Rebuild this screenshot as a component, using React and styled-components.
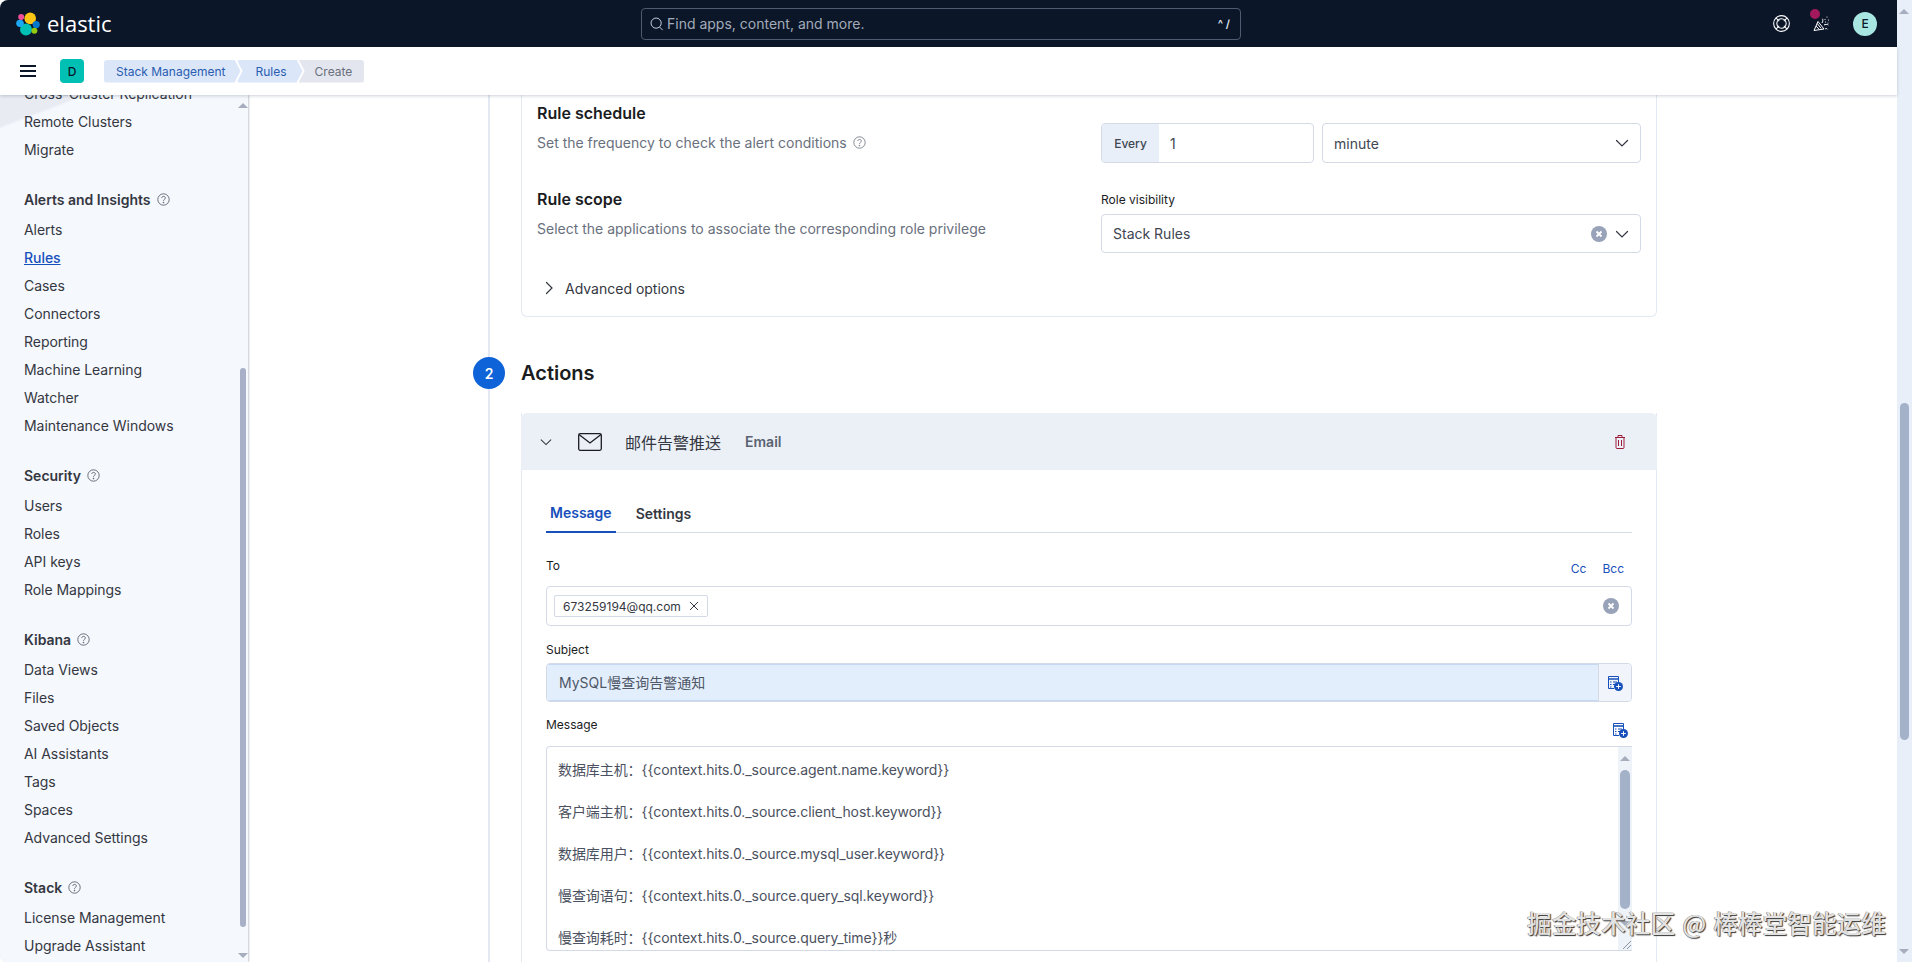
import React from 'react'
import styled, { createGlobalStyle } from 'styled-components'

const Global = createGlobalStyle`
  html, body { margin: 0; padding: 0; height: 100%; overflow: hidden; background: #fff; }
  body { font-family: Inter, "Noto Sans CJK SC", sans-serif; font-size: 14px; color: #343741; }
  * { box-sizing: border-box; }
`

const Screen = styled.div`
  position: relative;
  display: flex;
  width: 1912px;
  height: 962px;
  overflow: hidden;
`
const Shell = styled.div`
  width: 1897px;
  height: 962px;
  display: flex;
  flex-direction: column;
`
const PageScroll = styled.div`
  width: 15px;
  height: 962px;
  background: #e9eff8;
  padding: 403px 3px 0;
  position: relative;
`
const PageThumb = styled.div`
  height: 337px;
  background: #a3b1c9;
  border-radius: 5px;
`
const Arrow = styled.span`
  position: absolute;
  left: ${p => p.$left}px;
  ${p => (p.$down ? `bottom: ${p.$offset}px;` : `top: ${p.$offset}px;`)}
  width: 0;
  height: 0;
  border-left: 5px solid transparent;
  border-right: 5px solid transparent;
  ${p => (p.$down ? 'border-top: 5px solid #a6aebd;' : 'border-bottom: 5px solid #a6aebd;')}
`

const TopBar = styled.header`
  height: 47px;
  flex: none;
  background: #0b1628;
  border-top-left-radius: 8px;
  display: flex;
  align-items: center;
  padding: 0 20px 0 16px;
  color: #fff;
`
const Brand = styled.div`
  width: 625px;
  flex: none;
  display: flex;
  align-items: center;
  gap: 7px;
`
const BrandName = styled.span`
  font-family: "Open Sans", sans-serif;
  font-size: 22px;
  font-weight: 400;
  color: #fff;
  line-height: 24px;
  position: relative;
  top: -1px;
`
const SearchBox = styled.div`
  width: 600px;
  height: 32px;
  flex: none;
  border: 1px solid #4e5b70;
  border-radius: 4px;
  display: flex;
  align-items: center;
  padding: 0 10px 0 8px;
  gap: 3px;
  color: #a2abba;
  font-size: 14px;
`
const SearchText = styled.span`
  flex: 1;
`
const Shortcut = styled.span`
  font-size: 11px;
  font-weight: 600;
  color: #dfe5ef;
`
const HeaderIcons = styled.div`
  margin-left: auto;
  display: flex;
  align-items: center;
`
const HeaderIcon = styled.span`
  position: relative;
  width: 40px;
  height: 24px;
  display: flex;
  align-items: center;
  justify-content: center;
`
const Dot = styled.span`
  position: absolute;
  top: -3px;
  left: 9px;
  width: 10px;
  height: 10px;
  border-radius: 50%;
  background: #a3195b;
`
const Avatar = styled.span`
  width: 24px;
  height: 24px;
  margin-left: 12px;
  border-radius: 50%;
  background: #a8e6e2;
  color: #0b1628;
  font-size: 12px;
  font-weight: 500;
  display: flex;
  align-items: center;
  justify-content: center;
`

const CrumbBar = styled.div`
  height: 48px;
  flex: none;
  background: #fff;
  display: flex;
  align-items: center;
  padding: 0 0 0 20px;
  position: relative;
  z-index: 2;
  box-shadow: 0 1px 3px rgba(60, 75, 105, 0.25);
`
const Burger = styled.span`
  width: 16px;
  height: 12px;
  border-top: 2px solid #0b1628;
  border-bottom: 2px solid #0b1628;
  position: relative;
  &::after {
    content: '';
    position: absolute;
    left: 0;
    right: 0;
    top: 3px;
    height: 2px;
    background: #0b1628;
  }
`
const SpaceBadge = styled.span`
  width: 24px;
  height: 24px;
  margin-left: 24px;
  border-radius: 4px;
  background: #00bfb3;
  color: #0b1628;
  font-size: 12px;
  font-weight: 500;
  display: flex;
  align-items: center;
  justify-content: center;
`
const Crumbs = styled.div`
  display: flex;
  margin-left: 20px;
`
const Crumb = styled.span`
  height: 23px;
  display: flex;
  align-items: center;
  font-size: 12px;
  padding: ${p => (p.$first ? '0 15px 0 12px' : p.$current ? '0 12px 0 16px' : '0 16px 0 19px')};
  margin-left: ${p => (p.$first ? '0' : '-4px')};
  color: ${p => (p.$current ? '#69707d' : '#2a5cb0')};
  background: ${p => (p.$current ? '#e3e6ee' : '#dbe7f9')};
  border-radius: ${p => (p.$current ? '0 3px 3px 0' : '3px 0 0 3px')};
  clip-path: ${p =>
    p.$current
      ? 'polygon(0 0, 100% 0, 100% 100%, 0 100%, 6px 50%)'
      : p.$first
      ? 'polygon(0 0, calc(100% - 6px) 0, 100% 50%, calc(100% - 6px) 100%, 0 100%)'
      : 'polygon(0 0, calc(100% - 6px) 0, 100% 50%, calc(100% - 6px) 100%, 0 100%, 6px 50%)'};
`

const Body = styled.div`
  flex: 1;
  min-height: 0;
  display: flex;
`
const Sidebar = styled.aside`
  width: 248px;
  flex: none;
  position: relative;
  overflow: hidden;
  background: linear-gradient(159deg, #e8ebf2 29px, #f5f8fd 32px) no-repeat 0 0 / 100% 60px, #f5f8fd;
  box-shadow: 1px 0 2px rgba(60, 75, 105, 0.3);
  z-index: 1;
  border-bottom-left-radius: 8px;
`
const SideList = styled.div`
  margin-top: -16px;
  padding-left: 24px;
  display: flex;
  flex-direction: column;
`
const SideItem = styled.a`
  height: 28px;
  flex: none;
  display: flex;
  align-items: center;
  font-size: 14px;
  letter-spacing: -0.04px;
  color: ${p => (p.$active ? '#1750ba' : '#343741')};
  font-weight: ${p => (p.$active ? 500 : 400)};
  text-decoration: ${p => (p.$active ? 'underline' : 'none')};
`
const SideGroup = styled.div`
  height: 28px;
  margin-top: 22px;
  margin-bottom: 2px;
  flex: none;
  display: flex;
  align-items: center;
  gap: 6px;
  font-size: 14px;
  font-weight: 600;
  color: #343741;
`
const SideThumb = styled.div`
  position: absolute;
  left: 240px;
  top: 273px;
  width: 6px;
  height: 559px;
  border-radius: 3px;
  background: #a7b0c6;
`

const Main = styled.main`
  flex: 1;
  min-width: 0;
  overflow: hidden;
  padding-left: 240px;
`
const Steps = styled.div`
  width: 1169px;
  height: 100%;
  border-left: 2px solid #e3e8f2;
  padding-left: 31px;
  display: flex;
  flex-direction: column;
`
const Card = styled.section`
  width: 1136px;
  flex: none;
  border: 1px solid #e3e8f2;
  border-top: none;
  border-radius: 0 0 6px 6px;
  padding: 6px 15px 16px;
`
const Row = styled.div`
  display: grid;
  grid-template-columns: 564px 1fr;
  margin-bottom: ${p => p.$gap}px;
`
const RowTitle = styled.h3`
  margin: 0 0 7px;
  font-size: 16px;
  line-height: 24px;
  font-weight: 600;
  color: #1a1c21;
`
const RowText = styled.p`
  margin: 0;
  font-size: 14px;
  line-height: 21px;
  color: #69707d;
  display: flex;
  align-items: center;
  gap: 6px;
`
const ScheduleControls = styled.div`
  display: flex;
  gap: 8px;
  padding-top: 22px;
`
const Control = styled.div`
  height: ${p => p.$h || 40}px;
  flex: ${p => p.$flex || 1};
  border: 1px solid #d3dae6;
  border-radius: 4px;
  background: #fff;
  display: flex;
  align-items: center;
  font-size: 14px;
  color: #404652;
  overflow: hidden;
  min-width: 0;
`
const Prepend = styled.span`
  width: 57px;
  height: 100%;
  background: #e9eff8;
  font-size: 12px;
  font-weight: 500;
  display: flex;
  align-items: center;
  justify-content: center;
  flex: none;
`
const ControlText = styled.span`
  flex: 1;
  padding-left: 11px;
  white-space: nowrap;
`
const ControlIcons = styled.span`
  display: flex;
  align-items: center;
  gap: 7px;
  padding-right: 10px;
`
const ScopeField = styled.div`
  padding-top: 4px;
`
const SmallLabel = styled.label`
  display: block;
  font-size: 12px;
  line-height: 18px;
  font-weight: 400;
  color: #1a1c21;
  margin-bottom: ${p => p.$gap ?? 5}px;
`
const Advanced = styled.div`
  height: 24px;
  display: flex;
  align-items: center;
  gap: 8px;
  padding-left: 4px;
  font-size: 14px;
  color: #343741;
`
const StepHead = styled.div`
  margin: 40px 0 24px -48px;
  display: flex;
  align-items: center;
  gap: 16px;
  flex: none;
`
const StepNumber = styled.span`
  width: 32px;
  height: 32px;
  border-radius: 50%;
  background: #0f63d8;
  color: #fff;
  font-size: 14px;
  font-weight: 600;
  display: flex;
  align-items: center;
  justify-content: center;
`
const StepTitle = styled.h2`
  margin: 0;
  font-size: 20px;
  line-height: 32px;
  font-weight: 600;
  color: #1a1c21;
`
const ActionCard = styled.section`
  width: 1136px;
  flex: 1;
  border-right: 1px solid #e3e8f2;
  border-left: 1px solid #e3e8f2;
`
const ActionHead = styled.div`
  height: 57px;
  margin: 0 -1px;
  background: #ebf0f7;
  border-radius: 6px 6px 0 0;
  display: flex;
  align-items: center;
  padding: 0 21px 0 18px;
`
const MailSlot = styled.span`
  margin-left: 25px;
  display: flex;
`
const ActionName = styled.span`
  margin-left: 23px;
  font-size: 16px;
  color: #343741;
`
const ActionType = styled.span`
  margin-left: 24px;
  font-size: 14px;
  font-weight: 600;
  color: #5a6271;
`
const TrashSlot = styled.span`
  margin-left: auto;
  margin-right: 8px;
  display: flex;
`
const ActionBody = styled.div`
  padding: 23px 24px 0;
`
const Tabs = styled.div`
  height: 40px;
  display: flex;
  gap: 16px;
  border-bottom: 1px solid #d3dae6;
  margin-bottom: 24px;
`
const Tab = styled.span`
  height: 40px;
  padding: 0 4px;
  display: flex;
  align-items: center;
  font-size: 14px;
  font-weight: 600;
  color: ${p => (p.$active ? '#1750ba' : '#343741')};
  border-bottom: ${p => (p.$active ? '2px solid #1750ba' : 'none')};
`
const LabelRow = styled.div`
  height: ${p => p.$h}px;
  margin-top: ${p => p.$top || 0}px;
  display: flex;
  justify-content: space-between;
`
const LinkGroup = styled.div`
  display: flex;
  gap: 16px;
  padding: 3px 8px 0 0;
  font-size: 12px;
  line-height: 18px;
  color: #1750ba;
`
const FieldAction = styled.div`
  padding: 6px 4px 0 0;
`
const ChipBox = styled.div`
  height: 40px;
  border: 1px solid #d3dae6;
  border-radius: 4px;
  display: flex;
  align-items: center;
  justify-content: space-between;
  padding: 0 12px 0 7px;
`
const Chip = styled.span`
  width: 154px;
  height: 22px;
  border: 1px solid #d3dae6;
  border-radius: 2px;
  display: flex;
  align-items: center;
  justify-content: space-between;
  padding: 0 8px;
  font-size: 12px;
  font-weight: 400;
  color: #343741;
`
const SubjectBox = styled.div`
  height: 39px;
  display: flex;
  border: 1px solid #d3dae6;
  border-radius: 4px;
  overflow: hidden;
  margin-bottom: 14px;
`
const SubjectInput = styled.div`
  flex: 1;
  display: flex;
  align-items: center;
  padding: 0 0 1px 12px;
  background: #e3eefc;
  border: 1px solid #c5d9f3;
  border-width: 1px 0;
  font-size: 14px;
  color: #4f5766;
`
const SubjectAppend = styled.div`
  width: 33px;
  background: #f1f4fa;
  border-left: 1px solid #d3dae6;
  display: flex;
  align-items: center;
  justify-content: center;
`
const MessageBox = styled.div`
  height: 205px;
  border: 1px solid #d3dae6;
  border-right: none;
  border-radius: 4px 0 0 4px;
  display: flex;
  overflow: hidden;
`
const MessageLines = styled.div`
  flex: 1;
  padding: 12px 0 0 11px;
  font-size: 14px;
  line-height: 21px;
  letter-spacing: -0.08px;
  color: #4b5160;
`
const MessageLine = styled.div`
  height: 42px;
`
const Scroller = styled.div`
  position: relative;
  width: 14px;
  flex: none;
  margin-top: -1px;
  background: #eef2f9;
  padding: 24px 2px 0;
`
const ScrollThumb = styled.div`
  height: 139px;
  background: #a3b1c9;
  border-radius: 5px;
`
const Resizer = styled.svg`
  position: absolute;
  right: 0;
  bottom: 0;
`
const Watermark = styled.div`
  position: absolute;
  right: 26px;
  top: 906px;
  font-family: "Noto Sans CJK SC", sans-serif;
  font-size: 24.7px;
  line-height: 32px;
  font-weight: 500;
  word-spacing: 1.5px;
  white-space: nowrap;
  color: #e2e2e2;
  text-shadow: 1px 1px 1px #333, -0.5px -0.5px 0 #777;
`

const Line = ({ size = 16, color = '#343741', w = 1, children, vb = 16 }) => (
  <svg width={size} height={size} viewBox={`0 0 ${vb} ${vb}`} fill="none" stroke={color} strokeWidth={w}>
    {children}
  </svg>
)
const Down = props => (
  <Line w={1.2} {...props}>
    <path d="M2.5 5.500 8 11l5.500-5.500" strokeLinecap="round" />
  </Line>
)
const Right = props => (
  <Line w={1.2} {...props}>
    <path d="M5.500 2.500 11 8l-5.500 5.500" strokeLinecap="round" />
  </Line>
)
const Help = ({ size = 13, color = '#69707d' }) => (
  <Line size={size} color={color}>
    <circle cx="8" cy="8" r="7" />
    <path d="M5.800 6.200c.2-1.300 1.100-2 2.300-2 1.300 0 2.200.8 2.200 1.900 0 1.800-2.300 1.700-2.300 3.500" />
    <circle cx="8" cy="11.800" r=".5" fill={color} />
  </Line>
)
const Clear = () => (
  <svg width="16" height="16" viewBox="0 0 16 16">
    <circle cx="8" cy="8" r="8" fill="#98a2b8" />
    <path d="M5.500 5.500l5 5m0-5l-5 5" stroke="#fff" strokeWidth="1.800" />
  </svg>
)
const TokenIcon = () => (
  <svg width="16" height="16" viewBox="0 0 16 16" fill="none">
    <path d="M1.500 1.500h10v6M7 13.500H1.500v-12" stroke="#1750ba" strokeWidth="1" />
    <path d="M1.500 4h10" stroke="#1750ba" strokeWidth="1.600" />
    <path d="M3 7h1.500M6 7h4M3 9.500h1.500M6 9.500h2M3 12h1.500" stroke="#1750ba" strokeWidth="1" />
    <circle cx="11.500" cy="11.500" r="4.500" fill="#1750ba" />
    <path d="M11.500 9.200v4.600M9.200 11.500h4.600" stroke="#fff" strokeWidth="1" />
  </svg>
)
const Logo = () => (
  <svg width="24" height="24" viewBox="0 0 24 24">
    <circle cx="14.200" cy="6.400" r="5.800" fill="#fec514" />
    <circle cx="10" cy="17.600" r="6" fill="#00bfb3" />
    <ellipse cx="4" cy="11.300" rx="3.800" ry="3.600" fill="#1ba9f5" />
    <ellipse cx="5.200" cy="5" rx="3" ry="3" fill="#f04e98" />
    <ellipse cx="20.200" cy="12.600" rx="3.600" ry="3.600" fill="#0077cc" />
    <ellipse cx="18.400" cy="18.800" rx="3" ry="3" fill="#93c90e" />
  </svg>
)
const LifeRing = () => (
  <svg width="17" height="17" viewBox="0 0 16 16" fill="none" stroke="#fff" strokeWidth="1">
    <circle cx="8" cy="8" r="7.400" />
    <circle cx="8" cy="8" r="4.400" />
    <path d="M3 3l2.800 2.800M13 3l-2.800 2.800M3 13l2.800-2.800M13 13l-2.800-2.800" />
  </svg>
)
const Party = () => (
  <svg width="17" height="17" viewBox="0 0 17 17" fill="none" stroke="#fff" strokeWidth="1">
    <path d="M1 15.500 5 6.500l6 7.500z" />
    <path d="M3 11l3 3.200M4.200 8.500l4 5" />
    <path d="M9 8c1-1.600 1-3 .5-4.200M11 10c1.400-.8 3-.8 4.400 0M12 14c.8-.6 2-.6 2.500.3" />
    <path d="M12 4.500v.01M14 2v.01M15.500 5v.01M12.500 7v.01M15 8v.01" strokeLinecap="round" strokeWidth="1.200" />
  </svg>
)
const Mail = () => (
  <svg width="24" height="24" viewBox="0 0 24 24" fill="none" stroke="#1a1c21" strokeWidth="1.300">
    <rect x="0.700" y="3.700" width="22.600" height="16.600" rx="1.500" />
    <path d="M1 4.500 12 13 23 4.500" />
  </svg>
)
const Trash = () => (
  <svg width="16" height="16" viewBox="0 0 16 16" fill="none" stroke="#a01c3c" strokeWidth="1">
    <path d="M3 3.500h10M6 3.500V1.500h4v2M4 3.500v10a1 1 0 0 0 1 1h6a1 1 0 0 0 1-1v-10M6.500 6v6M9.500 6v6" />
  </svg>
)
const Glass = () => (
  <svg width="14" height="14" viewBox="0 0 16 16" fill="none" stroke="#cfd6e2" strokeWidth="1.100">
    <circle cx="7" cy="7" r="5.800" />
    <path d="M11 11.500l3.500 3.500" />
  </svg>
)
const Cross = () => (
  <svg width="10" height="10" viewBox="0 0 10 10" fill="none" stroke="#343741" strokeWidth="1">
    <path d="M1 1l8 8M9 1L1 9" />
  </svg>
)

const sideNav = [
  { items: ['Cross-Cluster Replication', 'Remote Clusters', 'Migrate'] },
  { title: 'Alerts and Insights', items: ['Alerts', 'Rules', 'Cases', 'Connectors', 'Reporting', 'Machine Learning', 'Watcher', 'Maintenance Windows'] },
  { title: 'Security', items: ['Users', 'Roles', 'API keys', 'Role Mappings'] },
  { title: 'Kibana', items: ['Data Views', 'Files', 'Saved Objects', 'AI Assistants', 'Tags', 'Spaces', 'Advanced Settings'] },
  { title: 'Stack', items: ['License Management', 'Upgrade Assistant'] },
]

const messages = [
  '数据库主机：{{context.hits.0._source.agent.name.keyword}}',
  '客户端主机：{{context.hits.0._source.client_host.keyword}}',
  '数据库用户：{{context.hits.0._source.mysql_user.keyword}}',
  '慢查询语句：{{context.hits.0._source.query_sql.keyword}}',
  '慢查询耗时：{{context.hits.0._source.query_time}}秒',
]

export default function App() {
  return (
    <Screen>
      <Global />
      <Shell>
        <TopBar>
          <Brand>
            <Logo />
            <BrandName>elastic</BrandName>
          </Brand>
          <SearchBox>
            <Glass />
            <SearchText>Find apps, content, and more.</SearchText>
            <Shortcut>^ /</Shortcut>
          </SearchBox>
          <HeaderIcons>
            <HeaderIcon><LifeRing /></HeaderIcon>
            <HeaderIcon><Dot /><Party /></HeaderIcon>
            <Avatar>E</Avatar>
          </HeaderIcons>
        </TopBar>
        <CrumbBar>
          <Burger />
          <SpaceBadge>D</SpaceBadge>
          <Crumbs>
            <Crumb $first>Stack Management</Crumb>
            <Crumb>Rules</Crumb>
            <Crumb $current>Create</Crumb>
          </Crumbs>
        </CrumbBar>
        <Body>
          <Sidebar>
            <SideList>
              {sideNav.map((group, i) => (
                <React.Fragment key={i}>
                  {group.title && (
                    <SideGroup>
                      {group.title} <Help color="#4a5160" />
                    </SideGroup>
                  )}
                  {group.items.map(item => (
                    <SideItem key={item} $active={item === 'Rules'}>{item}</SideItem>
                  ))}
                </React.Fragment>
              ))}
            </SideList>
            <SideThumb />
            <Arrow $left={238} $offset={8} />
            <Arrow $left={238} $offset={4} $down />
          </Sidebar>
          <Main>
            <Steps>
              <Card>
                <Row $gap={24}>
                  <div>
                    <RowTitle>Rule schedule</RowTitle>
                    <RowText>Set the frequency to check the alert conditions <Help /></RowText>
                  </div>
                  <ScheduleControls>
                    <Control $flex="0 0 213px">
                      <Prepend>Every</Prepend>
                      <ControlText>1</ControlText>
                    </Control>
                    <Control>
                      <ControlText>minute</ControlText>
                      <ControlIcons><Down /></ControlIcons>
                    </Control>
                  </ScheduleControls>
                </Row>
                <Row $gap={23}>
                  <div>
                    <RowTitle>Rule scope</RowTitle>
                    <RowText>Select the applications to associate the corresponding role privilege</RowText>
                  </div>
                  <ScopeField>
                    <SmallLabel>Role visibility</SmallLabel>
                    <Control $h={39}>
                      <ControlText>Stack Rules</ControlText>
                      <ControlIcons><Clear /><Down /></ControlIcons>
                    </Control>
                  </ScopeField>
                </Row>
                <Advanced>
                  <Right size={16} />
                  Advanced options
                </Advanced>
              </Card>
              <StepHead>
                <StepNumber>2</StepNumber>
                <StepTitle>Actions</StepTitle>
              </StepHead>
              <ActionCard>
                <ActionHead>
                  <Down size={14} />
                  <MailSlot><Mail /></MailSlot>
                  <ActionName>邮件告警推送</ActionName>
                  <ActionType>Email</ActionType>
                  <TrashSlot><Trash /></TrashSlot>
                </ActionHead>
                <ActionBody>
                  <Tabs>
                    <Tab $active>Message</Tab>
                    <Tab>Settings</Tab>
                  </Tabs>
                  <LabelRow $h={29}>
                    <SmallLabel $gap={0}>To</SmallLabel>
                    <LinkGroup><span>Cc</span><span>Bcc</span></LinkGroup>
                  </LabelRow>
                  <ChipBox>
                    <Chip>673259194@qq.com <Cross /></Chip>
                    <Clear />
                  </ChipBox>
                  <LabelRow $h={22} $top={15}>
                    <SmallLabel $gap={0}>Subject</SmallLabel>
                  </LabelRow>
                  <SubjectBox>
                    <SubjectInput>MySQL慢查询告警通知</SubjectInput>
                    <SubjectAppend><TokenIcon /></SubjectAppend>
                  </SubjectBox>
                  <LabelRow $h={30}>
                    <SmallLabel $gap={0}>Message</SmallLabel>
                    <FieldAction><TokenIcon /></FieldAction>
                  </LabelRow>
                  <MessageBox>
                    <MessageLines>
                      {messages.map(m => <MessageLine key={m}>{m}</MessageLine>)}
                    </MessageLines>
                    <Scroller>
                      <Arrow $left={2} $offset={10} />
                      <ScrollThumb />
                      <Arrow $left={2} $offset={24} $down />
                      <Resizer width="13" height="13" viewBox="0 0 13 13" fill="none" stroke="#8b93a3" strokeWidth="1">
                        <path d="M4 12l8-8M8 12l4-4" />
                      </Resizer>
                    </Scroller>
                  </MessageBox>
                </ActionBody>
              </ActionCard>
            </Steps>
          </Main>
        </Body>
      </Shell>
      <PageScroll>
        <Arrow $left={2} $offset={9} />
        <PageThumb />
        <Arrow $left={2} $offset={8} $down />
      </PageScroll>
      <Watermark>掘金技术社区 @ 棒棒堂智能运维</Watermark>
    </Screen>
  )
}
